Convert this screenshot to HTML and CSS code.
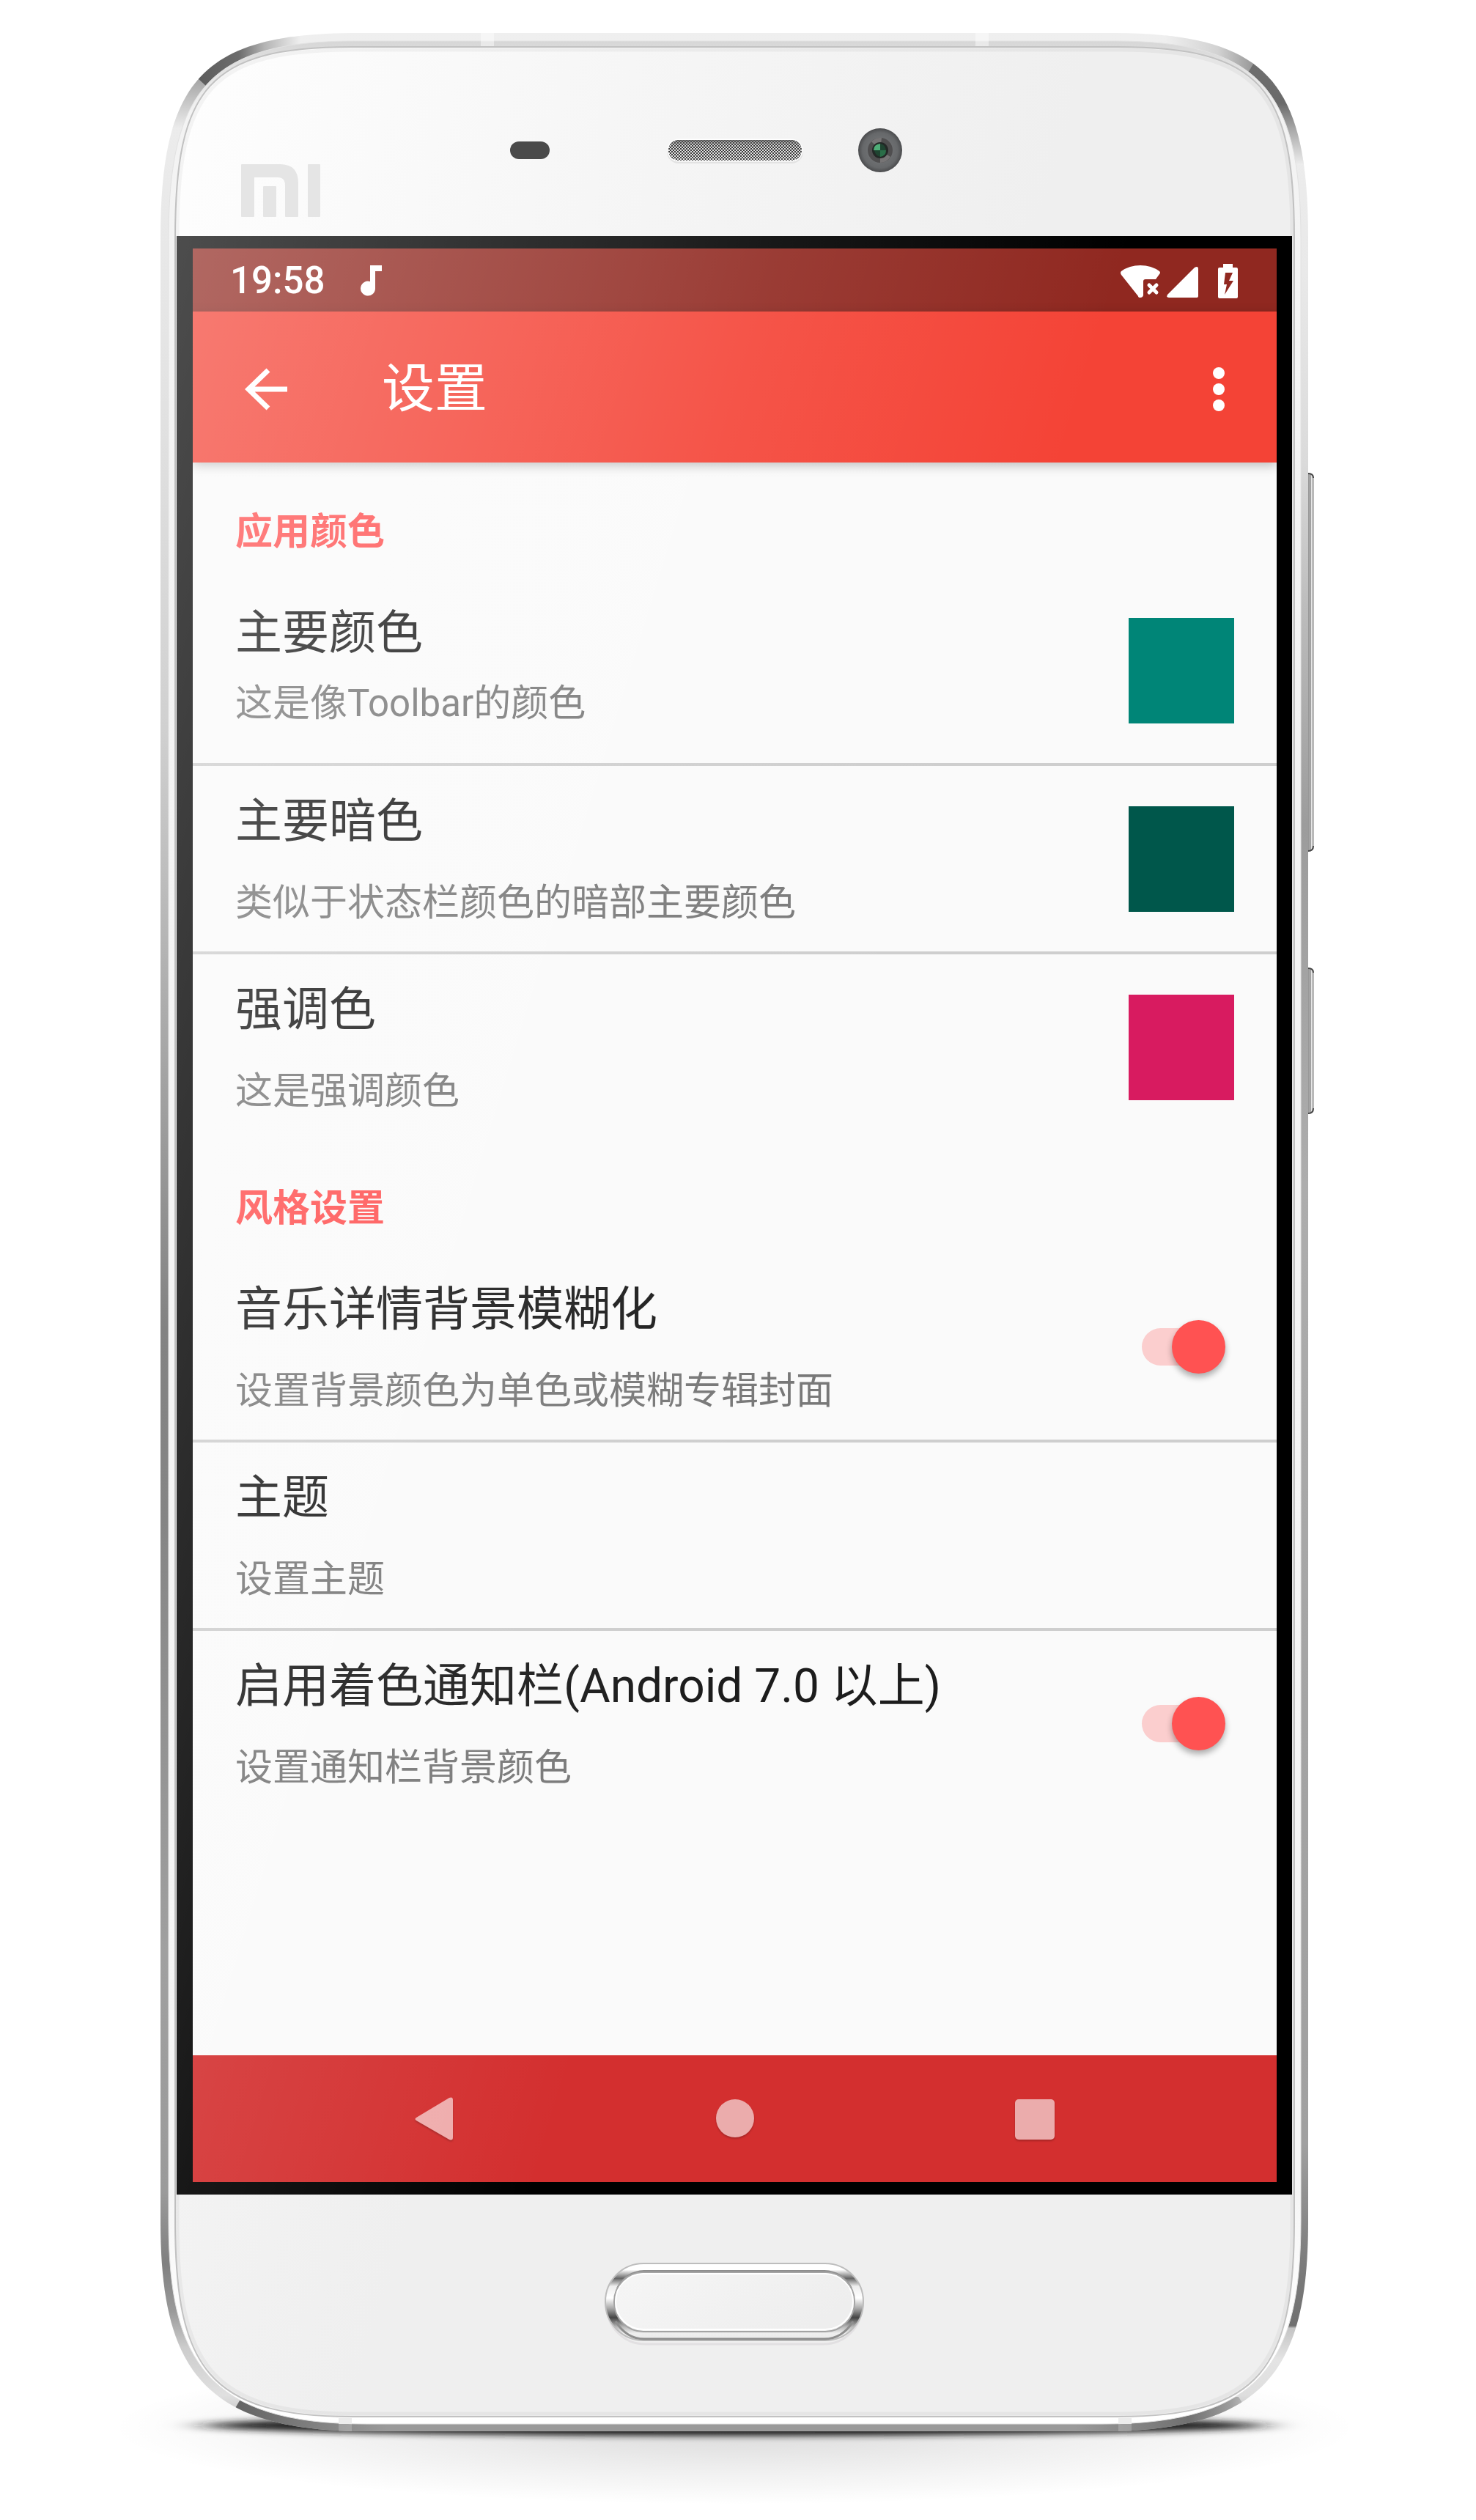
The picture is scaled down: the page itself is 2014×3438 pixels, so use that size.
FILE: index.html
```html
<!DOCTYPE html>
<html lang="zh-CN">
<head>
<meta charset="utf-8">
<meta name="viewport" content="width=device-width, initial-scale=1">
<title>设置</title>
<link rel="stylesheet" href="styles.css">
</head>
<body>
<div class="phone">
  <svg class="phone__shell" viewBox="219 45 1566 3272" preserveAspectRatio="none" aria-hidden="true">
    <defs>
      <linearGradient id="sideL" gradientUnits="userSpaceOnUse" x1="0" y1="45" x2="0" y2="3317">
        <stop offset="0" stop-color="#efefef"/><stop offset=".14" stop-color="#e4e4e4"/><stop offset=".29" stop-color="#d0d0d0"/>
        <stop offset=".42" stop-color="#a8a8a8"/><stop offset=".54" stop-color="#828282"/><stop offset=".62" stop-color="#858585"/>
        <stop offset=".8" stop-color="#a0a0a0"/><stop offset=".9" stop-color="#9a9a9a"/><stop offset=".93" stop-color="#808080"/>
        <stop offset=".95" stop-color="#9a9a9a"/><stop offset=".965" stop-color="#cccccc"/><stop offset=".985" stop-color="#e0e0e0"/><stop offset="1" stop-color="#b0b0b0"/>
      </linearGradient>
      <linearGradient id="sideR" gradientUnits="userSpaceOnUse" x1="0" y1="45" x2="0" y2="3317">
        <stop offset="0" stop-color="#efefef"/><stop offset=".1" stop-color="#e9e9e9"/><stop offset=".18" stop-color="#dadada"/>
        <stop offset=".24" stop-color="#bcbcbc"/><stop offset=".33" stop-color="#9c9c9c"/><stop offset=".48" stop-color="#adadad"/>
        <stop offset=".7" stop-color="#a4a4a4"/><stop offset=".88" stop-color="#a0a0a0"/><stop offset=".93" stop-color="#7c7c7c"/>
        <stop offset=".956" stop-color="#707070"/><stop offset=".957" stop-color="#c4c4c4"/><stop offset=".97" stop-color="#e4e4e4"/><stop offset=".985" stop-color="#dedede"/><stop offset="1" stop-color="#a0a0a0"/>
      </linearGradient>
      <linearGradient id="topL" gradientUnits="userSpaceOnUse" x1="270" y1="0" x2="410" y2="0">
        <stop offset="0" stop-color="#5c5c5c"/><stop offset=".4" stop-color="#6c6c6c"/><stop offset=".65" stop-color="#b4b4b4"/><stop offset="1" stop-color="#efefef"/>
      </linearGradient>
      <linearGradient id="cornerL" gradientUnits="userSpaceOnUse" x1="0" y1="105" x2="0" y2="175">
        <stop offset="0" stop-color="#a2a2a2"/><stop offset="1" stop-color="#ececec"/>
      </linearGradient>
      <linearGradient id="topR" gradientUnits="userSpaceOnUse" x1="1590" y1="0" x2="1710" y2="0">
        <stop offset="0" stop-color="#efefef"/><stop offset=".6" stop-color="#d2d2d2"/><stop offset="1" stop-color="#989898"/>
      </linearGradient>
      <linearGradient id="cornerR" gradientUnits="userSpaceOnUse" x1="0" y1="85" x2="0" y2="225">
        <stop offset="0" stop-color="#6e6e6e"/><stop offset=".4" stop-color="#6a6a6a"/><stop offset=".65" stop-color="#a8a8a8"/><stop offset="1" stop-color="#ededed"/>
      </linearGradient>
      <linearGradient id="bottom" gradientUnits="userSpaceOnUse" x1="317" y1="0" x2="1720" y2="0">
        <stop offset="0" stop-color="#626262"/><stop offset=".08" stop-color="#808080"/><stop offset=".15" stop-color="#9a9a9a"/>
        <stop offset=".82" stop-color="#9a9a9a"/><stop offset=".93" stop-color="#707070"/><stop offset=".97" stop-color="#9c9c9c"/><stop offset="1" stop-color="#dedede"/>
      </linearGradient>
      <linearGradient id="rim" gradientUnits="userSpaceOnUse" x1="0" y1="56" x2="0" y2="3307">
        <stop offset="0" stop-color="#d7d7d7"/><stop offset=".03" stop-color="#f3f3f3"/><stop offset=".9" stop-color="#f5f5f5"/><stop offset=".96" stop-color="#fefefe"/><stop offset="1" stop-color="#ffffff"/>
      </linearGradient>
      <linearGradient id="face" gradientUnits="userSpaceOnUse" x1="241" y1="64" x2="1380" y2="423">
        <stop offset="0" stop-color="#fefefe"/><stop offset=".5" stop-color="#f6f6f6"/><stop offset="1" stop-color="#efefef"/>
      </linearGradient>
      <radialGradient id="floor"><stop offset="0" stop-color="#000" stop-opacity=".15"/><stop offset=".5" stop-color="#000" stop-opacity=".07"/><stop offset="1" stop-color="#000" stop-opacity="0"/></radialGradient>
      <filter id="soft" x="-10%" y="-200%" width="120%" height="500%"><feGaussianBlur stdDeviation="26 4"/></filter>
      <linearGradient id="key" x1="0" y1="0" x2="1" y2="0">
        <stop offset="0" stop-color="#a8a8a8"/><stop offset=".5" stop-color="#a0a0a0"/><stop offset=".6" stop-color="#e8e8e8"/><stop offset=".8" stop-color="#d8d8d8"/><stop offset="1" stop-color="#6a6a6a"/>
      </linearGradient>
      <path id="outline" d="M219 325C219 105 280 45 490 45H1514C1724 45 1785 105 1785 325V3030C1785 3230 1729 3317 1504 3317H500C275 3317 219 3230 219 3030Z"/>
      <clipPath id="shellClip"><use href="#outline"/></clipPath>
    </defs>
    <ellipse cx="1002" cy="3312" rx="850" ry="105" fill="url(#floor)"/>
    <ellipse cx="1002" cy="3309" rx="725" ry="14" fill="#1c1c1c" filter="url(#soft)"/>
    <g stroke="#8a8a8a" stroke-width="1">
      <path d="M1785 646Q1792 646 1792 652V1154Q1792 1161 1785 1161Z" fill="url(#key)"/>
      <path d="M1785 1321Q1792 1321 1792 1327V1512Q1792 1519 1785 1519Z" fill="url(#key)"/>
    </g>
    <path d="M1785 646Q1792 646 1792 652M1785 1161Q1792 1161 1792 1154M1785 1321Q1792 1321 1792 1327M1785 1519Q1792 1519 1792 1512" fill="none" stroke="#444" stroke-width="2"/>
    <g clip-path="url(#shellClip)">
      <path d="M219 45H1002V3317H219Z" fill="url(#sideL)"/>
      <path d="M1002 45H1785V3317H1002Z" fill="url(#sideR)"/>
      <path d="M219 105H285V175H219Z" fill="url(#cornerL)"/>
      <path d="M268 105L300 135H410V45H268Z" fill="url(#topL)"/>
      <path d="M1590 45H1712V85L1690 120H1590Z" fill="url(#topR)"/>
      <path d="M1712 84L1690 120V225H1785V45H1712Z" fill="url(#cornerR)"/>
      <path d="M317 3292L330 3270H1690L1720 3317H310Z" fill="url(#bottom)"/>
    </g>
    <path d="M230 325C230 118 290 56 485 56H1519C1714 56 1775 118 1775 325V3030C1775 3222 1722 3307 1504 3307H500C284 3307 230 3222 230 3030Z" fill="url(#rim)" stroke="#e2e2e2" stroke-width="1"/>
    <path d="M239 325C239 120 285 64 480 64H1525C1720 64 1766 120 1766 325V3030C1766 3230 1720 3297 1525 3297H480C285 3297 239 3230 239 3030Z" fill="url(#face)" stroke="#c2c2c2" stroke-width="2"/>
    <path d="M242 325C242 123 288 68 480 68H1525C1717 68 1763 123 1763 325V3030C1763 3226 1717 3293 1525 3293H480C288 3293 242 3226 242 3030Z" fill="none" stroke="#000" stroke-opacity=".04" stroke-width="5"/>
    <g fill="#fff" fill-opacity=".45">
      <path d="M656 45H674V63H656ZM1331 45H1349V63H1331Z"/>
    </g>
    <path d="M462 3299H480V3307H462ZM1526 3299H1544V3307H1526Z" fill="#ececec"/>
    <path d="M462 3307H480V3317H462ZM1526 3307H1544V3317H1526Z" fill="#fff" fill-opacity=".2"/>
  </svg>

  <header class="phone__top">
    <svg class="phone__logo" viewBox="0 0 108 72" role="img" aria-label="MI">
      <path fill="#e5e5e5" d="M1 0H53Q78 0 78 26V71Q78 72 77 72H61Q60 72 60 71V29Q60 18 50 18H18V71Q18 72 17 72H1Q0 72 0 71V1Q0 0 1 0ZM31 30H47Q48 30 48 31V71Q48 72 47 72H31Q30 72 30 71V31Q30 30 31 30ZM92 0H107Q108 0 108 1V71Q108 72 107 72H92Q91 72 91 71V1Q91 0 92 0Z"/>
    </svg>
    <div class="phone__sensors">
      <span class="sensor"></span>
      <svg class="speaker" viewBox="0 0 182 30" aria-hidden="true">
        <defs>
          <pattern id="mesh" width="4" height="4" patternUnits="userSpaceOnUse"><path fill="#e6e6e6" d="M0 0H4V4H0Z"/><path fill="#2c2c2c" d="M0 0H2V2H0ZM2 2H4V4H2Z"/></pattern>
          <linearGradient id="meshShade" x1="0" y1="0" x2="0" y2="1"><stop offset="0" stop-color="#555" stop-opacity=".75"/><stop offset=".3" stop-color="#888" stop-opacity=".1"/><stop offset="1" stop-color="#fff" stop-opacity=".1"/></linearGradient>
        </defs>
        <rect x="0" y="3" width="182" height="28" rx="14" fill="none" stroke="#e2e2e2" stroke-width="4"/>
        <rect x="0" y="1" width="182" height="28" rx="14" fill="#fff" stroke="#fff" stroke-width="3"/>
        <rect x="0" y="1" width="182" height="28" rx="14" fill="url(#mesh)"/>
        <rect x="0" y="1" width="182" height="28" rx="14" fill="url(#meshShade)"/>
      </svg>
      <svg class="camera" viewBox="0 0 60 60" aria-hidden="true">
        <defs><radialGradient id="lens"><stop offset="0" stop-color="#7c7e80"/><stop offset=".8" stop-color="#66686a"/><stop offset="1" stop-color="#4a4b4d"/></radialGradient></defs>
        <circle cx="30" cy="30" r="30" fill="url(#lens)"/>
        <circle cx="30" cy="30" r="17" fill="#4f4e4f"/>
        <path d="M30 30L18 18A17 17 0 0 1 32 13ZM30 30L44 39A17 17 0 0 1 30 47Z" fill="#767475"/>
        <circle cx="30" cy="30" r="11" fill="#232826"/>
        <path d="M30 30H21Q21 22 30 21Z" fill="#4fae78"/>
        <path d="M30 30H38Q38 38 30 39Z" fill="#2a6e48"/>
        <path d="M30 30H22Q23 37 30 39ZM30 30V21Q37 22 38 30Z" fill="#1f4431"/>
      </svg>
    </div>
  </header>

  <div class="bezel">
    <div class="screen">
      <div class="status">
        <span class="status__time">19:58</span>
        <svg class="status__note" viewBox="0 0 30 42" aria-hidden="true"><path fill="#fff" d="M14 0H30V8H21V32A10 10 0 1 1 14 22Z"/></svg>
        <span class="status__icons">
          <svg width="54" height="46" viewBox="0 0 54 46" aria-hidden="true"><path fill="#fff" d="M1 9Q12 1 27 1T53 9Q55 11 53 13L48 20H34Q31 20 31 23V42Q30 45 27 45T24 43L1 14Q-1 11 1 9Z"/><path d="M39 28L49 38M49 28L39 38" stroke="#fff" stroke-width="5" stroke-linecap="round"/></svg>
          <svg class="status__signal" width="43" height="44" viewBox="0 0 43 44" aria-hidden="true"><path fill="#fff" d="M38 2Q43-1 43 4V41Q43 43 41 43H3Q-1 43 1 39Z"/></svg>
          <svg class="status__battery" width="27" height="47" viewBox="0 0 27 47" aria-hidden="true"><path fill="#fff" fill-rule="evenodd" d="M7 0H20V5H25Q27 5 27 7V45Q27 47 25 47H2Q0 47 0 45V7Q0 5 2 5H7ZM10 12L8 28H12L9 42L21 23H15L20 12Z"/></svg>
        </span>
      </div>

      <div class="toolbar">
        <button class="icon-button" type="button" aria-label="返回">
          <svg width="58" height="58" viewBox="0 0 58 58" aria-hidden="true"><path d="M32 3L5 29L32 55M5 29H58" fill="none" stroke="#fff" stroke-width="7"/></svg>
        </button>
        <h1 class="toolbar__title">设置</h1>
        <button class="icon-button icon-button--end" type="button" aria-label="更多">
          <svg width="16" height="60" viewBox="0 0 16 60" aria-hidden="true"><g fill="#fff"><circle cx="8" cy="8" r="8"/><circle cx="8" cy="30" r="8"/><circle cx="8" cy="52" r="8"/></g></svg>
        </button>
      </div>

      <main class="settings">
        <h2 class="settings__group">应用颜色</h2>
        <div class="row row--tight">
          <div class="row__text"><p class="row__title">主要颜色</p><p class="row__note">这是像Toolbar的颜色</p></div>
          <button class="swatch swatch--primary" type="button" aria-label="主要颜色"></button>
        </div>
        <div class="row">
          <div class="row__text"><p class="row__title">主要暗色</p><p class="row__note">类似于状态栏颜色的暗部主要颜色</p></div>
          <button class="swatch swatch--dark" type="button" aria-label="主要暗色"></button>
        </div>
        <div class="row row--last">
          <div class="row__text"><p class="row__title">强调色</p><p class="row__note">这是强调颜色</p></div>
          <button class="swatch swatch--accent" type="button" aria-label="强调色"></button>
        </div>
        <h2 class="settings__group">风格设置</h2>
        <div class="row">
          <label class="row__text" for="blur"><span class="row__title">音乐详情背景模糊化</span><span class="row__note">设置背景颜色为单色或模糊专辑封面</span></label>
          <input class="switch" id="blur" type="checkbox" role="switch" checked>
        </div>
        <div class="row">
          <div class="row__text"><p class="row__title">主题</p><p class="row__note">设置主题</p></div>
        </div>
        <div class="row row--last">
          <label class="row__text" for="tint"><span class="row__title">启用着色通知栏(Android 7.0 以上)</span><span class="row__note">设置通知栏背景颜色</span></label>
          <input class="switch" id="tint" type="checkbox" role="switch" checked>
        </div>
      </main>

      <nav class="navbar">
        <button class="navbar__key" type="button" aria-label="后退"><svg width="54" height="62" viewBox="0 0 54 62" aria-hidden="true"><path fill="#efacac" d="M-1 29L44 2Q49 0 49 5V56Q49 61 44 59L-1 33Q-4 31-1 29Z" transform="translate(2 0)"/></svg></button>
        <button class="navbar__key" type="button" aria-label="主屏幕"><svg width="54" height="62" viewBox="0 0 54 62" aria-hidden="true"><circle cx="27" cy="30" r="26" fill="#ebacac"/></svg></button>
        <button class="navbar__key" type="button" aria-label="最近任务"><svg width="54" height="62" viewBox="0 0 54 62" aria-hidden="true"><rect y="4" width="54" height="55" rx="5" fill="#ebacac"/></svg></button>
      </nav>
    </div>
  </div>

  <footer class="phone__bottom">
    <button class="home" type="button" aria-label="Home">
      <svg width="354" height="114" viewBox="0 0 354 114" aria-hidden="true">
        <defs>
          <linearGradient id="ring" gradientUnits="userSpaceOnUse" x1="0" y1="0" x2="0" y2="107">
            <stop offset="0" stop-color="#fff"/><stop offset=".09" stop-color="#fff"/><stop offset=".2" stop-color="#666"/><stop offset=".3" stop-color="#eee"/>
            <stop offset=".45" stop-color="#fff"/><stop offset=".58" stop-color="#aaa"/><stop offset=".7" stop-color="#444"/><stop offset=".82" stop-color="#bbb"/><stop offset=".9" stop-color="#eee"/><stop offset="1" stop-color="#e8e8e8"/>
          </linearGradient>
          <linearGradient id="cap" x1="0" y1="0" x2="1" y2="0.4"><stop offset="0" stop-color="#f6f6f6"/><stop offset="1" stop-color="#eeeeee"/></linearGradient>
        </defs>
        <rect x="3" y="7" width="348" height="104" rx="52" fill="none" stroke="#e2e0e2" stroke-width="3"/>
        <rect x="7" y="7" width="340" height="93" rx="46" fill="url(#cap)" stroke="url(#ring)" stroke-width="12"/>
        <rect x="1" y="1" width="352" height="105" rx="52" fill="none" stroke="#bdbdbd" stroke-width="2"/>
        <path d="M15 80Q30 104 54 104H300Q324 104 339 80" fill="none" stroke="#8e8e8e" stroke-width="3"/>
        <path d="M18 35Q30 13 54 12H300Q324 13 336 35" fill="none" stroke="#8e8e8e" stroke-width="4"/>
        <rect x="13" y="13" width="328" height="81" rx="40" fill="none" stroke="#a4a4a4" stroke-width="2"/>
        <rect x="15" y="15" width="324" height="76" rx="38" fill="none" stroke="#fff" stroke-width="2"/>
      </svg>
    </button>
  </footer>
</div>
</body>
</html>
```
FILE: styles.css
```css
* {
  box-sizing: border-box;
}

body {
  margin: 0;
  padding: 45px 229px 121px 219px;
  background: #fff;
  font-family: Roboto, "Noto Sans CJK SC", sans-serif;
}

h1,
h2,
p {
  margin: 0;
  font-weight: 400;
}

button {
  padding: 0;
  border: 0;
  background: none;
  cursor: pointer;
}

svg {
  display: block;
}

/* Phone body */

.phone {
  position: relative;
  padding: 0 22px;
}

.phone__shell {
  position: absolute;
  inset: 0;
  width: 100%;
  height: 100%;
  overflow: visible;
}

.phone__top,
.bezel,
.phone__bottom {
  position: relative;
}

.phone__top {
  display: flex;
  align-items: flex-end;
  gap: 259px;
  height: 277px;
  padding: 0 88px 26px;
}

.phone__logo {
  width: 108px;
  height: 72px;
}

.phone__sensors {
  display: flex;
  align-items: center;
  padding-bottom: 61px;
}

.sensor {
  width: 54px;
  height: 24px;
  border-radius: 12px;
  background: #4a4a4a;
}

.speaker {
  width: 182px;
  height: 30px;
  margin: 0 77px 0 162px;
  overflow: visible;
}

.camera {
  width: 60px;
  height: 60px;
}

.phone__bottom {
  display: flex;
  justify-content: center;
  padding: 93px 0 116px;
}

/* Display */

.bezel {
  padding: 17px 21px 17px 22px;
  background: #000;
}

.bezel::after {
  content: "";
  position: absolute;
  inset: 0;
  background: linear-gradient(107deg,
    rgba(255, 255, 255, 0.3) 0,
    rgba(255, 255, 255, 0.14) 620px,
    rgba(255, 255, 255, 0.09) 800px,
    rgba(255, 255, 255, 0) 1250px);
  pointer-events: none;
}

.screen {
  background: #fafafa;
}

.status {
  display: flex;
  align-items: center;
  height: 86px;
  padding: 2px 53px 0 51px;
  background: #902820;
  color: #fff;
}

.status__time {
  font-size: 51px;
  font-weight: 500;
  line-height: 60px;
}

.status__note {
  width: 30px;
  height: 42px;
  margin-left: 48px;
}

.status__icons {
  display: flex;
  align-items: flex-end;
  gap: 9px;
  margin-left: auto;
}

.status__battery {
  margin-left: 18px;
}

.toolbar {
  position: relative;
  display: flex;
  align-items: center;
  height: 206px;
  padding: 6px 71px 0;
  background: #f44336;
  box-shadow: 0 4px 14px rgba(0, 0, 0, 0.25);
  color: #fff;
}

.toolbar__title {
  margin-left: 129px;
  font-size: 72px;
  line-height: 84px;
}

.icon-button--end {
  margin-left: auto;
}

/* Settings list */

.settings {
  padding: 5px 0 322px;
}

.settings__group {
  padding: 60px 58px 32px;
  color: #ff5252;
  font-size: 51px;
  font-weight: 700;
  line-height: 60px;
}

.row {
  display: flex;
  align-items: center;
  justify-content: space-between;
  height: 257px;
  padding: 0 58px;
  border-bottom: 4px solid #cecece;
}

.row--last {
  border-color: transparent;
}

.row__text {
  display: flex;
  flex: 1;
  flex-direction: column;
  align-self: flex-start;
  gap: 41px;
  padding-top: 36px;
}

.row--tight .row__text {
  gap: 26px;
}

.row__title {
  color: #1c1c1c;
  font-size: 64px;
  line-height: 80px;
}

.row__note {
  color: #787878;
  font-size: 51px;
  line-height: 60px;
}

.swatch {
  width: 144px;
  height: 144px;
}

.swatch--primary {
  background: #008577;
}

.swatch--dark {
  background: #00574b;
}

.swatch--accent {
  background: #d81b60;
}

.switch {
  display: grid;
  align-items: center;
  appearance: none;
  width: 114px;
  height: 73px;
  margin: 0 12px 0 0;
  cursor: pointer;
}

.switch::before,
.switch::after {
  content: "";
  grid-area: 1 / 1;
}

.switch::before {
  width: 102px;
  height: 51px;
  border-radius: 26px;
  background: #fbcece;
}

.switch::after {
  justify-self: end;
  width: 73px;
  height: 73px;
  border-radius: 50%;
  background: #ff5252;
  box-shadow: 0 5px 8px rgba(0, 0, 0, 0.32);
}

/* System navigation */

.navbar {
  display: flex;
  align-items: center;
  justify-content: center;
  gap: 355px;
  height: 173px;
  background: #d32f2f;
}

.navbar__key svg {
  overflow: visible;
  filter: drop-shadow(0 2px 1px rgba(0, 0, 0, 0.2));
}
```
